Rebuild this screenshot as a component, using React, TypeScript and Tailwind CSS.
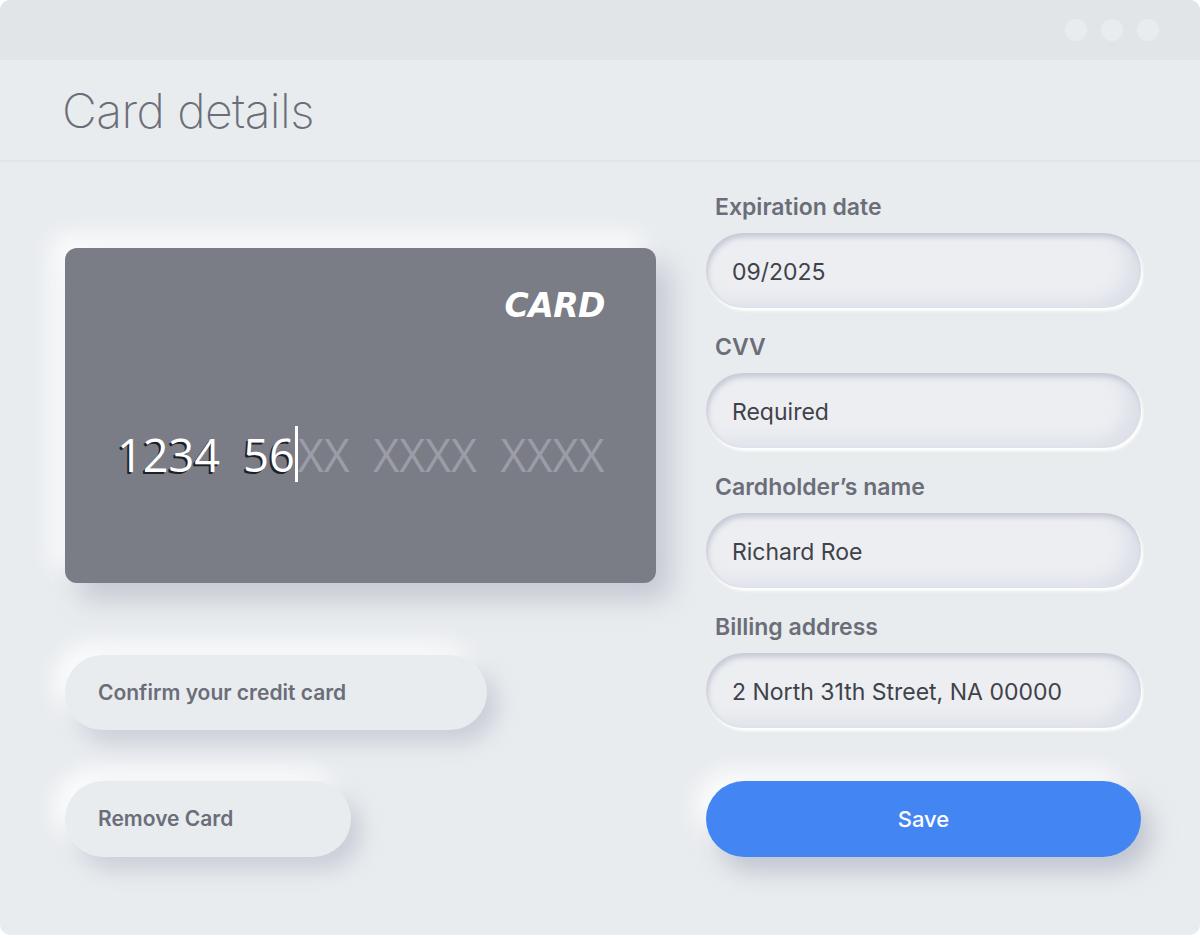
import React from "react"

const fields = [
    { label: "Expiration date", value: "09/2025" },
    { label: "CVV", value: "Required" },
    { label: "Cardholder’s name", value: "Richard Roe" },
    { label: "Billing address", value: "2 North 31th Street, NA 00000" },
]

const raised =
    "shadow-[10px_12px_22px_rgba(160,166,186,0.45),-10px_-10px_22px_rgba(255,255,255,0.95)]"

export default function App() {
    return (
        <div className="w-[1200px] h-[935px] bg-white" style={{ fontFamily: "Inter, 'Noto Sans', sans-serif" }}>
            <div className="w-full h-full rounded-[10px] overflow-hidden bg-[#e9ecef] flex flex-col">
                {/* title bar */}
                <div className="h-[60px] bg-[#e2e5e8] flex items-center justify-end gap-[14px] pr-[41px]">
                    <span className="w-[22px] h-[22px] rounded-full bg-[#e9ecef]" />
                    <span className="w-[22px] h-[22px] rounded-full bg-[#e9ecef]" />
                    <span className="w-[22px] h-[22px] rounded-full bg-[#e9ecef]" />
                </div>

                {/* heading */}
                <div className="h-[102px] border-b-2 border-[#e0e3e7] flex items-center pl-[62px] pt-[2px]">
                    <h1 className="text-[48px] font-extralight text-[#6b6e78] tracking-[-0.6px]">Card details</h1>
                </div>

                <div className="flex pl-[65px] gap-[50px]">
                    {/* left column */}
                    <div className="w-[591px] flex flex-col pt-[86px]">
                        <div className="h-[335px] rounded-[12px] bg-[#7a7c86] relative shadow-[14px_16px_28px_rgba(150,156,176,0.45),-12px_-12px_24px_rgba(255,255,255,0.95)]">
                            <div
                                className="absolute right-[51px] top-[33px] text-[33px] font-bold italic text-white tracking-[-0.5px]"
                                style={{ fontFamily: "'DejaVu Sans', sans-serif" }}
                            >
                                CARD
                            </div>
                            <div
                                className="absolute left-[52px] top-[178px] flex items-center text-[45px] leading-none whitespace-pre"
                                style={{ fontFamily: "'Open Sans', sans-serif" }}
                            >
                                <span className="text-white [text-shadow:-2px_2px_0_#1f2026]">1234  56</span>
                                <span className="w-[3px] h-[56px] bg-white" />
                                <span className="text-[#9b9da6]">XX  XXXX  XXXX</span>
                            </div>
                        </div>

                        <button
                            className={`mt-[72px] w-[422px] h-[75px] rounded-full bg-[#e9ecef] text-left pl-[33px] text-[21px] font-semibold text-[#6b6e78] ${raised}`}
                        >
                            Confirm your credit card
                        </button>
                        <button
                            className={`mt-[51px] w-[286px] h-[76px] rounded-full bg-[#e9ecef] text-left pl-[33px] text-[21px] font-semibold text-[#6b6e78] ${raised}`}
                        >
                            Remove Card
                        </button>
                    </div>

                    {/* right column */}
                    <div className="w-[435px] flex flex-col pt-[31px]">
                        {fields.map((f, i) => (
                            <div key={f.label} className={i > 0 ? "mt-[25px]" : ""}>
                                <div className="pl-[9px] h-[28px] leading-[28px] text-[23px] font-semibold text-[#6b6e78]">{f.label}</div>
                                <div className="mt-[12px] h-[75px] rounded-full bg-[#eceef2] flex items-center pl-[26px] pt-[3px] text-[23px] text-[#3f4249] shadow-[inset_2px_4px_5px_rgba(170,175,192,0.55),inset_-14px_-6px_16px_rgba(214,218,228,0.7),2px_3px_3px_rgba(255,255,255,0.95)]">
                                    {f.value}
                                </div>
                            </div>
                        ))}
                        <button className="mt-[53px] h-[76px] rounded-full bg-[#4485f4] text-white text-[22px] font-medium shadow-[10px_14px_24px_rgba(150,156,176,0.5),-10px_-10px_22px_rgba(255,255,255,0.95)]">
                            Save
                        </button>
                    </div>
                </div>
            </div>
        </div>
    )
}
